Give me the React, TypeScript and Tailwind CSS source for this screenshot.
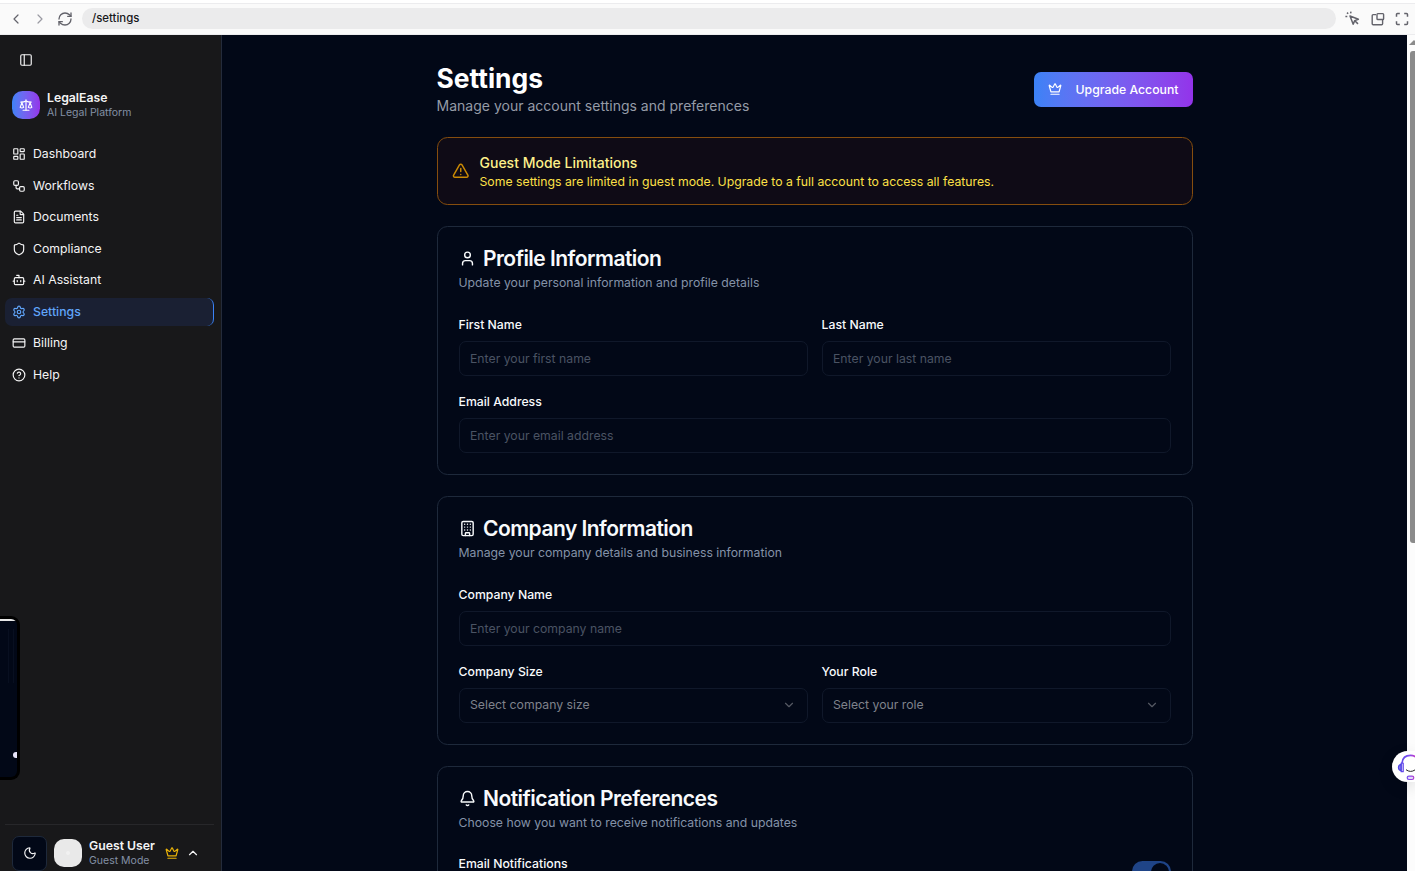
import type { ReactNode } from "react";
import {
  Bell,
  Bot,
  ChevronDown,
  ChevronLeft,
  ChevronRight,
  ChevronUp,
  CircleQuestionMark,
  CreditCard,
  Crown,
  FileText,
  LayoutDashboard,
  Moon,
  PanelLeft,
  RefreshCw,
  Scale,
  Settings,
  Shield,
  TriangleAlert,
  User,
  Workflow,
  Building,
  type LucideIcon,
} from "lucide-react";

const navItems: { label: string; icon: LucideIcon; active?: boolean }[] = [
  { label: "Dashboard", icon: LayoutDashboard },
  { label: "Workflows", icon: Workflow },
  { label: "Documents", icon: FileText },
  { label: "Compliance", icon: Shield },
  { label: "AI Assistant", icon: Bot },
  { label: "Settings", icon: Settings, active: true },
  { label: "Billing", icon: CreditCard },
  { label: "Help", icon: CircleQuestionMark },
];

function PickElementIcon() {
  return (
    <svg width="15" height="15" viewBox="0 0 15 15" fill="none" stroke="currentColor" strokeWidth="1.5" className="shrink-0">
      <path d="M5 5 13.4 8.2 9.7 9.6 8.2 13.2z" strokeLinejoin="round" />
      <path d="M9.8 9.7l3.2 3.2" />
      <path d="M6 .6 5.6 2.4M2 1.6l1.2 1.2M.4 5.5h1.9" />
    </svg>
  );
}

function PopOutIcon() {
  return (
    <svg width="14" height="14" viewBox="0 0 14 14" fill="none" stroke="currentColor" strokeWidth="1.4">
      <path d="M5 2.6H2.2a1 1 0 0 0-1 1v8.2a1 1 0 0 0 1 1h8.4a1 1 0 0 0 1-1V7.5" />
      <rect x="6" y="1.6" width="6.6" height="5.9" rx="0.8" />
    </svg>
  );
}

function FullscreenIcon() {
  return (
    <svg width="14" height="14" viewBox="0 0 14 14" fill="none" stroke="currentColor" strokeWidth="1.5">
      <path d="M1.5 4.8V2.5a1 1 0 0 1 1-1h2.3M9.2 1.5h2.3a1 1 0 0 1 1 1v2.3M12.5 9.2v2.3a1 1 0 0 1-1 1H9.2M4.8 12.5H2.5a1 1 0 0 1-1-1V9.2" />
    </svg>
  );
}

function BrowserBar() {
  return (
    <div className="flex h-[35px] shrink-0 flex-col bg-white pt-[3px]">
      <div className="flex h-8 items-center border-y border-[#ececee] bg-[#fafafa] pl-2 text-[#63636b]">
        <ChevronLeft className="size-4" strokeWidth={1.8} />
        <ChevronRight className="ml-2 size-4 text-[#9a9aa2]" strokeWidth={1.8} />
        <RefreshCw className="ml-[9px] size-4" strokeWidth={2} />
        <div className="ml-[9px] -mt-px flex h-[21px] w-[1254px] items-center rounded-full bg-[#ebebec] pl-2.5 text-[11.4px] leading-[21px] font-medium text-[#18181b]">
          /settings
        </div>
        <div className="-mt-px ml-[9px]">
          <PickElementIcon />
        </div>
        <div className="-mt-px ml-[11px]">
          <PopOutIcon />
        </div>
        <div className="ml-2.5">
          <FullscreenIcon />
        </div>
      </div>
    </div>
  );
}

function Sidebar() {
  return (
    <aside className="flex w-[222px] shrink-0 flex-col border-r border-[#242b3b] bg-[#18181a] text-[#f4f4f5]">
      <div className="px-[19px] pt-[18px]">
        <PanelLeft className="size-3.5" />
      </div>
      <div className="mt-6 flex h-7 items-center gap-[7px] px-3">
        <div className="flex size-7 items-center justify-center rounded-[10.5px] bg-linear-to-r from-[#3b82f6] to-[#9333ea] text-white">
          <Scale className="size-3.5" />
        </div>
        <div className="-mt-px">
          <div className="text-[12.25px] leading-[15px] font-semibold">LegalEase</div>
          <div className="text-[10.5px] leading-[15px] text-[#8390a5]">AI Legal Platform</div>
        </div>
      </div>
      <nav className="mt-[21px] flex flex-col gap-[3.5px] pr-[7px] pl-[5px]">
        {navItems.map(({ label, icon: Icon, active }) => (
          <div
            key={label}
            className={
              active
                ? "flex h-7 items-center gap-[7px] rounded-[7px] border-r border-[#3b82f6] bg-[#1a2033] px-[7px] text-[12.25px] leading-[17.5px] font-medium text-[#60a5fa]"
                : "flex h-7 items-center gap-[7px] rounded-[7px] px-[7px] text-[12.25px] leading-[17.5px]"
            }
          >
            <Icon className="size-3.5 shrink-0" />
            {label}
          </div>
        ))}
      </nav>
      <div className="mt-auto mr-[7px] ml-[5px] flex h-[47px] items-start border-t border-[#27272a] pt-[11px] pl-[7px]">
        <div className="flex size-[35px] items-center justify-center rounded-[7px] border border-[#1e293b] bg-[#020817] pb-px">
          <Moon className="size-3.5" />
        </div>
        <div className="mt-[3px] ml-[7px] flex size-7 items-center justify-center rounded-[10px] bg-[#e9e9e9]">
          <div className="size-1 rounded-full bg-[#f1f1f1]" />
        </div>
        <div className="mt-[2px] ml-[7px] w-[76px]">
          <div className="text-[12.25px] leading-[15px] font-semibold">Guest User</div>
          <div className="text-[10.5px] leading-[15px] text-[#8390a5]">Guest Mode</div>
        </div>
        <Crown className="mt-[10px] size-3.5 text-[#eab308]" />
        <ChevronUp className="mt-[10px] ml-[7px] size-3.5" />
      </div>
    </aside>
  );
}

function Card({
  icon: Icon,
  title,
  description,
  children,
}: {
  icon: LucideIcon;
  title: string;
  description: string;
  children: ReactNode;
}) {
  return (
    <section className="rounded-[10.5px] border border-[#1e293b] p-[21px] pt-0">
      <div className="flex flex-col gap-[5.25px] py-[21px]">
        <h2 className="flex items-center gap-[7px] text-[21px] leading-[21px] font-semibold tracking-[-0.525px]">
          <Icon className="ml-[0.5px] size-[17px]" />
          {title}
        </h2>
        <p className="text-[12.25px] leading-[17.5px] text-[#8492a8]">{description}</p>
      </div>
      {children}
    </section>
  );
}

function Field({ label, hint, select }: { label: string; hint: string; select?: boolean }) {
  return (
    <div className="flex min-w-0 flex-1 flex-col gap-[7px]">
      <div className="h-[21px] text-[14px] leading-[21px]">
        <label className="text-[12.25px] leading-none font-medium">{label}</label>
      </div>
      {select ? (
        <div className="flex h-[35px] items-center justify-between rounded-[7px] border border-[#10182a] px-[10.5px] text-[12.25px] leading-[17.5px] text-[#7f828b]">
          {hint}
          <ChevronDown className="size-3.5 text-[#555963]" />
        </div>
      ) : (
        <div className="flex h-[35px] items-center rounded-[7px] border border-[#10182a] px-[10.5px] pt-px text-[12.25px] leading-[18px] text-[#4a5363]">
          {hint}
        </div>
      )}
    </div>
  );
}

function Scrollbar() {
  return (
    <div className="flex w-2 shrink-0 flex-col items-end overflow-hidden bg-[#fcfcfc] pt-[5px]">
      <svg width="6" height="5" viewBox="0 0 6 5" className="shrink-0">
        <path d="M0 5 5 0 10 5z" fill="#8b8b8b" />
      </svg>
      <div className="mt-[6px] h-[492px] w-[5px] shrink-0 rounded-l-[3px] bg-[#8b8b8b]" />
    </div>
  );
}

function PagePreview() {
  return (
    <div className="absolute top-[616px] left-0 h-[164px] w-5 overflow-hidden rounded-r-[9px] border-[3px] border-l-0 border-black bg-[#020817]">
      <div className="h-[1.5px] bg-[#e8e8e8]" />
      <div className="mt-2 ml-2 h-[54px] w-1.5 border-x border-[#080f20]" />
      <div className="absolute top-[133px] left-[13px] h-[6px] w-[6px] rounded-full bg-[#e8e6fb]" />
    </div>
  );
}

function SupportBubble() {
  return (
    <div className="absolute top-[751px] right-0 h-[31px] w-[23px] rounded-l-full bg-white shadow-[0_5px_16px_rgba(0,0,0,0.12)]">
      <svg width="23" height="31" viewBox="0 0 23 31" fill="none">
        <defs>
          <linearGradient id="headset" x1="5" y1="0" x2="29" y2="0" gradientUnits="userSpaceOnUse">
            <stop stopColor="#4f46e5" />
            <stop offset="0.5" stopColor="#7c4df0" />
            <stop offset="0.75" stopColor="#c038c8" />
          </linearGradient>
        </defs>
        <path d="M10 12C10.5 7 14 4.4 18.5 4.4S26 7 27 12" stroke="url(#headset)" strokeWidth="1.6" />
        <path d="M9.2 12.2h2v8.5h-2z" stroke="url(#headset)" strokeWidth="1.3" strokeLinejoin="round" />
        <path d="M9 13.3c-3.4.7-3.4 5.7 0 6.4z" fill="#8b7bf0" stroke="#4f46e5" strokeWidth="1.2" />
        <path d="M14 18.7q4.5 3.3 9 .2" stroke="#27272a" strokeWidth="1" />
        <rect x="15.2" y="25.1" width="6.6" height="3.4" rx="1.7" fill="#e4d8fb" stroke="url(#headset)" strokeWidth="1.2" />
      </svg>
    </div>
  );
}

export default function App() {
  return (
    <div className="relative flex h-[871px] w-[1415px] flex-col overflow-hidden bg-[#020817] font-[Inter,sans-serif] text-[#f8fafc]">
      <BrowserBar />
      <div className="flex min-h-0 flex-1">
        <Sidebar />
        <main className="flex min-w-0 flex-1 justify-center overflow-hidden pt-7">
          <div className="flex w-[756px] flex-col gap-[21px]">
            <header className="flex items-center justify-between">
              <div>
                <h1 className="text-[26.4px] leading-[31.5px] font-bold text-white">Settings</h1>
                <p className="text-[14px] leading-[21px] tracking-[0.01px] text-[#959ba7]">
                  Manage your account settings and preferences
                </p>
              </div>
              <button className="flex h-[35px] items-center rounded-[7px] bg-linear-to-r from-[#3b82f6] to-[#9333ea] px-3.5 text-[12.25px] leading-[17.5px] font-medium text-white">
                <Crown className="mr-3.5 size-3.5" />
                Upgrade Account
              </button>
            </header>

            <div className="flex items-center gap-[10.5px] rounded-[10.5px] border border-[#854d0e] bg-[#0f0b16] p-3.5">
              <TriangleAlert className="size-[17.5px] text-[#ca8a04]" />
              <div>
                <h3 className="text-[14px] leading-[21px] font-medium text-[#fef08a]">Guest Mode Limitations</h3>
                <p className="text-[12.25px] leading-[17.5px] text-[#fde047]">
                  Some settings are limited in guest mode. Upgrade to a full account to access all features.
                </p>
              </div>
            </div>

            <Card
              icon={User}
              title="Profile Information"
              description="Update your personal information and profile details"
            >
              <div className="flex flex-col gap-3.5">
                <div className="flex gap-3.5">
                  <Field label="First Name" hint="Enter your first name" />
                  <Field label="Last Name" hint="Enter your last name" />
                </div>
                <Field label="Email Address" hint="Enter your email address" />
              </div>
            </Card>

            <Card
              icon={Building}
              title="Company Information"
              description="Manage your company details and business information"
            >
              <div className="flex flex-col gap-3.5">
                <Field label="Company Name" hint="Enter your company name" />
                <div className="flex gap-3.5">
                  <Field label="Company Size" hint="Select company size" select />
                  <Field label="Your Role" hint="Select your role" select />
                </div>
              </div>
            </Card>

            <Card
              icon={Bell}
              title="Notification Preferences"
              description="Choose how you want to receive notifications and updates"
            >
              <div className="flex items-start justify-between">
                <div className="h-[21px] text-[14px] leading-[21px]">
                  <label className="text-[12.25px] leading-none font-medium">Email Notifications</label>
                </div>
                <div className="mt-[9px] flex h-[21px] w-[38.5px] items-center justify-end rounded-full bg-[#1f4487] p-[1.75px]">
                  <div className="size-[17.5px] rounded-full bg-[#020817]" />
                </div>
              </div>
            </Card>
          </div>
        </main>
        <Scrollbar />
      </div>
      <PagePreview />
      <SupportBubble />
    </div>
  );
}
